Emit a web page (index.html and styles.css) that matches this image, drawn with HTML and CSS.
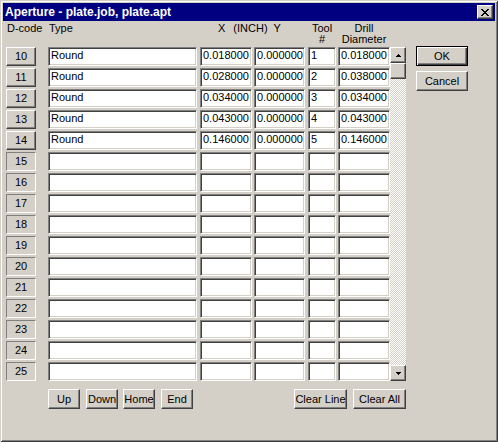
FILE: index.html
```html
<!DOCTYPE html>
<html>
<head>
<meta charset="utf-8">
<link rel="stylesheet" href="styles.css">
</head>
<body>
<div class="window">
  <div class="titlebar">
    <span class="title">Aperture - plate.job, plate.apt</span>
    <div class="close"><svg width="8" height="7" viewBox="0 0 8 7" shape-rendering="crispEdges"><path fill="#000" d="M0 0h2v1H0zM6 0h2v1H6zM1 1h2v1H1zM5 1h2v1H5zM2 2h4v1H2zM3 3h2v1H3zM2 4h4v1H2zM1 5h2v1H1zM5 5h2v1H5zM0 6h2v1H0zM6 6h2v1H6z"/></svg></div>
  </div>
  <div class="client">
    <div class="main">
      <div class="table">
        <div class="head">
          <div class="h-code">D-code</div>
          <div class="h-type">Type</div>
          <div class="h-xy"><span>X</span><span class="h-inch">(INCH)</span><span class="h-y">Y</span></div>
          <div class="h-tool">Tool<br>#</div>
          <div class="h-diam">Drill<br>Diameter</div>
        </div>
        <div class="body">
          <div class="rows">
            <div class="row"><div class="code btn">10</div><div class="field type">Round</div><div class="field x">0.018000</div><div class="field y">0.000000</div><div class="field tool">1</div><div class="field diam">0.018000</div></div>
            <div class="row"><div class="code btn">11</div><div class="field type">Round</div><div class="field x">0.028000</div><div class="field y">0.000000</div><div class="field tool">2</div><div class="field diam">0.038000</div></div>
            <div class="row"><div class="code btn">12</div><div class="field type">Round</div><div class="field x">0.034000</div><div class="field y">0.000000</div><div class="field tool">3</div><div class="field diam">0.034000</div></div>
            <div class="row"><div class="code btn">13</div><div class="field type">Round</div><div class="field x">0.043000</div><div class="field y">0.000000</div><div class="field tool">4</div><div class="field diam">0.043000</div></div>
            <div class="row"><div class="code btn">14</div><div class="field type">Round</div><div class="field x">0.146000</div><div class="field y">0.000000</div><div class="field tool">5</div><div class="field diam">0.146000</div></div>
            <div class="row"><div class="code sunk">15</div><div class="field type"></div><div class="field x"></div><div class="field y"></div><div class="field tool"></div><div class="field diam"></div></div>
            <div class="row"><div class="code sunk">16</div><div class="field type"></div><div class="field x"></div><div class="field y"></div><div class="field tool"></div><div class="field diam"></div></div>
            <div class="row"><div class="code sunk">17</div><div class="field type"></div><div class="field x"></div><div class="field y"></div><div class="field tool"></div><div class="field diam"></div></div>
            <div class="row"><div class="code sunk">18</div><div class="field type"></div><div class="field x"></div><div class="field y"></div><div class="field tool"></div><div class="field diam"></div></div>
            <div class="row"><div class="code sunk">19</div><div class="field type"></div><div class="field x"></div><div class="field y"></div><div class="field tool"></div><div class="field diam"></div></div>
            <div class="row"><div class="code sunk">20</div><div class="field type"></div><div class="field x"></div><div class="field y"></div><div class="field tool"></div><div class="field diam"></div></div>
            <div class="row"><div class="code sunk">21</div><div class="field type"></div><div class="field x"></div><div class="field y"></div><div class="field tool"></div><div class="field diam"></div></div>
            <div class="row"><div class="code sunk">22</div><div class="field type"></div><div class="field x"></div><div class="field y"></div><div class="field tool"></div><div class="field diam"></div></div>
            <div class="row"><div class="code sunk">23</div><div class="field type"></div><div class="field x"></div><div class="field y"></div><div class="field tool"></div><div class="field diam"></div></div>
            <div class="row"><div class="code sunk">24</div><div class="field type"></div><div class="field x"></div><div class="field y"></div><div class="field tool"></div><div class="field diam"></div></div>
            <div class="row"><div class="code sunk">25</div><div class="field type"></div><div class="field x"></div><div class="field y"></div><div class="field tool"></div><div class="field diam"></div></div>
          </div>
          <div class="scrollbar">
            <div class="sb-btn btn"><svg width="5" height="3" viewBox="0 0 5 3" shape-rendering="crispEdges"><path fill="#000" d="M2 0h1v1H2zM1 1h3v1H1zM0 2h5v1H0z"/></svg></div>
            <div class="sb-thumb btn"></div>
            <div class="sb-track"></div>
            <div class="sb-btn btn"><svg width="5" height="3" viewBox="0 0 5 3" shape-rendering="crispEdges"><path fill="#000" d="M0 0h5v1H0zM1 1h3v1H1zM2 2h1v1H2z"/></svg></div>
          </div>
        </div>
      </div>
      <div class="side">
        <div class="btn side-btn default">OK</div>
        <div class="btn side-btn">Cancel</div>
      </div>
    </div>
    <div class="bottom">
      <div class="btn bb">Up</div>
      <div class="btn bb">Down</div>
      <div class="btn bb home">Home</div>
      <div class="btn bb">End</div>
      <div class="btn wide clear-line">Clear Line</div>
      <div class="btn wide">Clear All</div>
    </div>
  </div>
</div>
</body>
</html>
```
FILE: styles.css
```css
* { box-sizing: border-box; }
body {
  margin: 0;
  background: #ffffff;
  font-family: "Liberation Sans", Arial, sans-serif;
  font-size: 11px;
  color: #000;
}
.window {
  width: 498px;
  height: 442px;
  background: #d4d0c8;
  padding: 3px;
  box-shadow: inset 1px 1px #d4d0c8, inset -1px -1px #404040, inset 2px 2px #ffffff, inset -2px -2px #808080;
  display: flex;
  flex-direction: column;
}
.titlebar {
  height: 18px;
  flex: none;
  background: #000080;
  color: #fff;
  display: flex;
  align-items: center;
  justify-content: space-between;
  padding: 0 2px;
}
.title {
  font-weight: bold;
  font-size: 12px;
  line-height: 14px;
}
.close {
  width: 16px;
  height: 14px;
  background: #d4d0c8;
  border: 1px solid;
  border-color: #ffffff #404040 #404040 #ffffff;
  box-shadow: inset -1px -1px #808080;
  display: flex;
  align-items: center;
  justify-content: center;
}
.client {
  padding: 1px 0 0 3px;
}
.main {
  display: flex;
}
.head {
  display: flex;
  height: 25px;
  line-height: 11px;
  padding-top: 1px;
}
.h-code { width: 42px; padding-left: 1px; }
.h-type { width: 152px; padding-left: 1px; }
.h-xy { width: 108px; padding-left: 18px; white-space: nowrap; }
.h-inch { margin-left: 8px; }
.h-y { margin-left: 6px; }
.h-tool { width: 28px; margin-right: 2px; text-align: center; }
.h-diam { width: 52px; text-align: center; }

.body { display: flex; }
.rows {
  display: flex;
  flex-direction: column;
  gap: 2px;
}
.row {
  display: flex;
  height: 19px;
}
.btn {
  background: #d4d0c8;
  border: 1px solid;
  border-color: #ffffff #404040 #404040 #ffffff;
  box-shadow: inset -1px -1px #808080;
  display: flex;
  align-items: center;
  justify-content: center;
  line-height: 13px;
  white-space: nowrap;
}
.code {
  width: 30px;
  margin-right: 12px;
  display: flex;
  align-items: center;
  justify-content: center;
  line-height: 13px;
}
.sunk {
  background: #d4d0c8;
  border: 1px solid;
  border-color: #808080 #ffffff #ffffff #808080;
}
.field {
  background: #fff;
  border: 1px solid;
  border-color: #808080 #ffffff #ffffff #808080;
  box-shadow: inset 1px 1px #404040, inset -1px -1px #d4d0c8;
  padding: 1px 2px 0 2px;
  line-height: 13px;
  white-space: nowrap;
  overflow: hidden;
}
.type { width: 149px; margin-right: 3px; }
.x { width: 52px; margin-right: 2px; }
.y { width: 51px; margin-right: 3px; }
.tool { width: 28px; margin-right: 2px; }
.diam { width: 52px; }

.scrollbar {
  width: 16px;
  display: flex;
  flex-direction: column;
}
.sb-btn, .sb-thumb {
  height: 16px;
  flex: none;
}
.sb-track {
  flex: 1;
  background: repeating-conic-gradient(#ffffff 0 25%, #d4d0c8 0 50%) 0 0 / 2px 2px;
}

.side {
  margin-left: 10px;
  padding-top: 24px;
  display: flex;
  flex-direction: column;
  gap: 5px;
}
.side-btn {
  width: 52px;
  height: 20px;
}
.default {
  border-color: #000;
  box-shadow: inset 1px 1px #ffffff, inset -1px -1px #404040, inset -2px -2px #808080;
}

.bottom {
  display: flex;
  width: 400px;
  margin-top: 8px;
  padding-left: 42px;
  gap: 6px;
}
.bb { width: 32px; height: 20px; }
.home { margin-left: -1px; }
.wide { width: 53px; height: 20px; }
.clear-line { margin-left: auto; }
```
